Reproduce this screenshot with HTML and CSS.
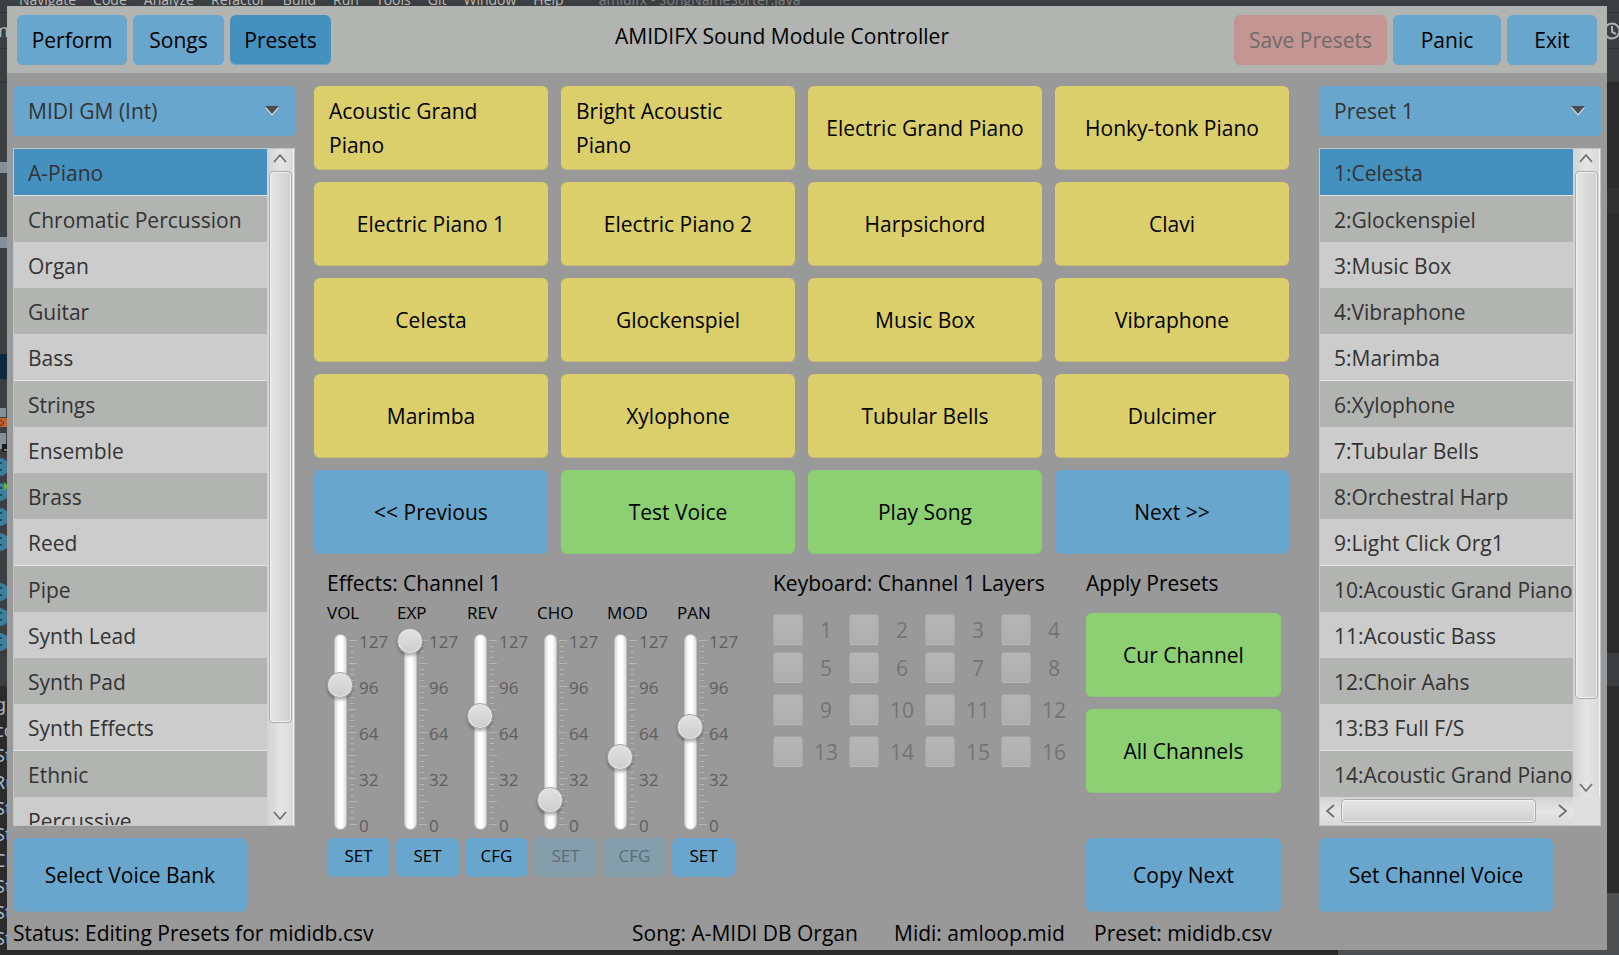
FILE: index.html
```html
<!DOCTYPE html>
<html lang="en">
<head>
<meta charset="utf-8">
<title>AMIDIFX Sound Module Controller</title>
<link rel="stylesheet" href="styles.css">
</head>
<body>
<svg class="defs" width="0" height="0" aria-hidden="true">
  <symbol id="down" viewBox="0 0 16 10"><path d="M1 1.500h14L8 9.500z" fill="#e8eef2"/><path d="M1 0h14L8 8z" fill="#4d4d4d"/></symbol>
  <symbol id="chev" viewBox="0 0 16 10"><path d="M2 9 8 2 14 9" fill="none" stroke="#6e6e6e" stroke-width="1.700"/></symbol>
  <symbol id="ticks" viewBox="0 0 8 186">
    <g stroke="#b4b4b4" shape-rendering="crispEdges">
      <path d="M0 1.500h8M0 24.500h8M0 47.500h8M0 70.500h8M0 93.500h8M0 116.500h8M0 139.500h8M0 162.500h8M0 185.500h8"/>
      <path d="M1 7.500h4M1 12.500h4M1 18.500h4M1 30.500h4M1 35.500h4M1 41.500h4M1 53.500h4M1 58.500h4M1 64.500h4M1 76.500h4M1 81.500h4M1 87.500h4M1 99.500h4M1 104.500h4M1 110.500h4M1 122.500h4M1 127.500h4M1 133.500h4M1 145.500h4M1 150.500h4M1 156.500h4M1 168.500h4M1 173.500h4M1 179.500h4"/>
    </g>
  </symbol>
</svg>

<div class="desktop">
  <div class="ide-menu">
    <span><u>N</u>avigate</span><span><u>C</u>ode</span><span>Analy<u>z</u>e</span><span><u>R</u>efactor</span><span><u>B</u>uild</span><span>R<u>u</u>n</span><span><u>T</u>ools</span><span>Gi<u>t</u></span><span><u>W</u>indow</span><span><u>H</u>elp</span><span class="ide-title">amidifx - SongNameSorter.java</span>
  </div>

  <svg class="ide-left" width="7" height="944" viewBox="0 6 7 944" aria-hidden="true">
    <rect y="6" width="7" height="680" fill="#3c3f41"/>
    <rect y="686" width="7" height="264" fill="#2b2b2b"/>
    <path d="M0 12.500h7M0 48.500h7M0 82.500h7M0 652.500h7" stroke="#2f3133"/>
    <rect y="162" width="7" height="11" fill="#84919a"/><rect y="237" width="7" height="11" fill="#84919a"/>
    <rect y="354" width="7" height="25" fill="#0d293e"/>
    <rect y="408" width="6" height="9" fill="#84919a"/>
    <rect y="418" width="7" height="9" fill="#c4602f"/><path d="M0 420l4 3-4 3" fill="none" stroke="#5a2c18"/>
    <rect y="433" width="6" height="16" fill="#84919a"/><path d="M2 444h5v8H2z" fill="#1b1b1b"/><path d="M4 450h3" stroke="#ddd"/>
    <g fill="#3b7f9c"><circle cy="467" r="9"/><circle cy="492" r="9"/><circle cy="517" r="9"/><circle cy="542" r="9"/><circle cy="592" r="9"/><circle cy="617" r="9"/><circle cy="642" r="9"/></g>
    <path d="M0 463h2M0 470h2M0 488h2M0 495h2M0 513h2M0 520h2M0 538h2M0 545h2M0 588h2M0 595h2M0 613h2M0 620h2M0 638h2M0 645h2" stroke="#28495a" stroke-width="2"/>
    <path d="M4 482l4 4-4 5z" fill="#62b543"/>
    <g class="ide-code">
      <text x="-8" y="37">m</text><text x="-5" y="711">g</text><text x="-5" y="737">co</text><text x="-5" y="762">St</text><text x="-6" y="789">Ru</text><text x="-5" y="815">St</text><text x="-5" y="841">St</text><text x="-6" y="867">Cl</text><text x="-5" y="893">St</text><text x="-5" y="919">St</text><text x="-5" y="945">St</text>
    </g>
  </svg>

  <div class="window">
    <header class="toolbar">
      <nav class="tools">
        <button class="btn w-110">Perform</button>
        <button class="btn w-91">Songs</button>
        <button class="btn w-101 active">Presets</button>
      </nav>
      <h1>AMIDIFX Sound Module Controller</h1>
      <div class="tools end">
        <button class="btn danger w-153" disabled>Save Presets</button>
        <button class="btn w-108">Panic</button>
        <button class="btn w-90">Exit</button>
      </div>
    </header>

    <main class="content">
      <section class="side">
        <div class="combo">
          <select aria-label="Sound module"><option>MIDI GM (Int)</option></select>
          <svg width="16" height="10"><use href="#down"/></svg>
        </div>
        <div class="listbox">
          <ul class="rows" role="listbox" aria-label="Voice banks">
            <li role="option" aria-selected="true">A-Piano</li>
            <li role="option">Chromatic Percussion</li>
            <li role="option">Organ</li>
            <li role="option">Guitar</li>
            <li role="option">Bass</li>
            <li role="option">Strings</li>
            <li role="option">Ensemble</li>
            <li role="option">Brass</li>
            <li role="option">Reed</li>
            <li role="option">Pipe</li>
            <li role="option">Synth Lead</li>
            <li role="option">Synth Pad</li>
            <li role="option">Synth Effects</li>
            <li role="option">Ethnic</li>
            <li role="option">Percussive</li>
          </ul>
          <div class="vbar">
            <svg width="16" height="10"><use href="#chev"/></svg>
            <div class="track"><div class="thumb" style="height:87%"></div></div>
            <svg class="flip" width="16" height="10"><use href="#chev"/></svg>
          </div>
        </div>
        <button class="btn big w-234">Select Voice Bank</button>
      </section>

      <section class="center">
        <div class="voices">
          <button class="voice wrap">Acoustic Grand<br>Piano</button>
          <button class="voice wrap">Bright Acoustic<br>Piano</button>
          <button class="voice">Electric Grand Piano</button>
          <button class="voice">Honky-tonk Piano</button>
          <button class="voice">Electric Piano 1</button>
          <button class="voice">Electric Piano 2</button>
          <button class="voice">Harpsichord</button>
          <button class="voice">Clavi</button>
          <button class="voice">Celesta</button>
          <button class="voice">Glockenspiel</button>
          <button class="voice">Music Box</button>
          <button class="voice">Vibraphone</button>
          <button class="voice">Marimba</button>
          <button class="voice">Xylophone</button>
          <button class="voice">Tubular Bells</button>
          <button class="voice">Dulcimer</button>
          <button class="voice blue">&lt;&lt; Previous</button>
          <button class="voice green">Test Voice</button>
          <button class="voice green">Play Song</button>
          <button class="voice blue">Next &gt;&gt;</button>
        </div>

        <div class="panels">
          <section class="effects">
            <h2>Effects: Channel 1</h2>
            <div class="sliders">
              <div class="fader"><label for="vol">VOL</label><div class="fader-body"><span class="rail"></span><svg width="8" height="186"><use href="#ticks"/></svg><div class="scale"><span>127</span><span>96</span><span>64</span><span>32</span><span>0</span></div><input id="vol" type="range" min="0" max="127" value="96"></div></div>
              <div class="fader"><label for="exp">EXP</label><div class="fader-body"><span class="rail"></span><svg width="8" height="186"><use href="#ticks"/></svg><div class="scale"><span>127</span><span>96</span><span>64</span><span>32</span><span>0</span></div><input id="exp" type="range" min="0" max="127" value="127"></div></div>
              <div class="fader"><label for="rev">REV</label><div class="fader-body"><span class="rail"></span><svg width="8" height="186"><use href="#ticks"/></svg><div class="scale"><span>127</span><span>96</span><span>64</span><span>32</span><span>0</span></div><input id="rev" type="range" min="0" max="127" value="75"></div></div>
              <div class="fader"><label for="cho">CHO</label><div class="fader-body"><span class="rail"></span><svg width="8" height="186"><use href="#ticks"/></svg><div class="scale"><span>127</span><span>96</span><span>64</span><span>32</span><span>0</span></div><input id="cho" type="range" min="0" max="127" value="16"></div></div>
              <div class="fader"><label for="mod">MOD</label><div class="fader-body"><span class="rail"></span><svg width="8" height="186"><use href="#ticks"/></svg><div class="scale"><span>127</span><span>96</span><span>64</span><span>32</span><span>0</span></div><input id="mod" type="range" min="0" max="127" value="46"></div></div>
              <div class="fader"><label for="pan">PAN</label><div class="fader-body"><span class="rail"></span><svg width="8" height="186"><use href="#ticks"/></svg><div class="scale"><span>127</span><span>96</span><span>64</span><span>32</span><span>0</span></div><input id="pan" type="range" min="0" max="127" value="67"></div></div>
            </div>
            <div class="fx-buttons">
              <button class="btn small">SET</button>
              <button class="btn small">SET</button>
              <button class="btn small">CFG</button>
              <button class="btn small" disabled>SET</button>
              <button class="btn small" disabled>CFG</button>
              <button class="btn small">SET</button>
            </div>
          </section>

          <section class="keyboard">
            <h2>Keyboard: Channel 1 Layers</h2>
            <div class="layers">
              <label><input type="checkbox" disabled><span>1</span></label>
              <label><input type="checkbox" disabled><span>2</span></label>
              <label><input type="checkbox" disabled><span>3</span></label>
              <label><input type="checkbox" disabled><span>4</span></label>
              <label><input type="checkbox" disabled><span>5</span></label>
              <label><input type="checkbox" disabled><span>6</span></label>
              <label><input type="checkbox" disabled><span>7</span></label>
              <label><input type="checkbox" disabled><span>8</span></label>
              <label><input type="checkbox" disabled><span>9</span></label>
              <label><input type="checkbox" disabled><span>10</span></label>
              <label><input type="checkbox" disabled><span>11</span></label>
              <label><input type="checkbox" disabled><span>12</span></label>
              <label><input type="checkbox" disabled><span>13</span></label>
              <label><input type="checkbox" disabled><span>14</span></label>
              <label><input type="checkbox" disabled><span>15</span></label>
              <label><input type="checkbox" disabled><span>16</span></label>
            </div>
          </section>

          <section class="apply">
            <h2>Apply Presets</h2>
            <div class="apply-buttons">
              <button class="voice green">Cur Channel</button>
              <button class="voice green">All Channels</button>
            </div>
            <button class="btn big">Copy Next</button>
          </section>
        </div>
      </section>

      <section class="side">
        <div class="combo">
          <select aria-label="Preset"><option>Preset 1</option></select>
          <svg width="16" height="10"><use href="#down"/></svg>
        </div>
        <div class="listbox scroll-x">
          <ul class="rows" role="listbox" aria-label="Channel voices">
            <li role="option" aria-selected="true">1:Celesta</li>
            <li role="option">2:Glockenspiel</li>
            <li role="option">3:Music Box</li>
            <li role="option">4:Vibraphone</li>
            <li role="option">5:Marimba</li>
            <li role="option">6:Xylophone</li>
            <li role="option">7:Tubular Bells</li>
            <li role="option">8:Orchestral Harp</li>
            <li role="option">9:Light Click Org1</li>
            <li role="option">10:Acoustic Grand Piano</li>
            <li role="option">11:Acoustic Bass</li>
            <li role="option">12:Choir Aahs</li>
            <li role="option">13:B3 Full F/S</li>
            <li role="option">14:Acoustic Grand Piano</li>
          </ul>
          <div class="vbar">
            <svg width="16" height="10"><use href="#chev"/></svg>
            <div class="track"><div class="thumb" style="height:87%"></div></div>
            <svg class="flip" width="16" height="10"><use href="#chev"/></svg>
          </div>
          <div class="hbar">
            <svg class="left" width="16" height="10"><use href="#chev"/></svg>
            <div class="track"><div class="thumb" style="width:92%"></div></div>
            <svg class="right" width="16" height="10"><use href="#chev"/></svg>
          </div>
        </div>
        <button class="btn big w-234">Set Channel Voice</button>
      </section>
    </main>

    <footer class="status">
      <span>Status: Editing Presets for mididb.csv</span>
      <span>Song: A-MIDI DB Organ</span>
      <span>Midi: amloop.mid</span>
      <span>Preset: mididb.csv</span>
    </footer>
  </div>

  <svg class="ide-right" width="12" height="944" viewBox="1607 6 12 944" aria-hidden="true">
    <rect x="1607" y="6" width="12" height="944" fill="#2b2b2b"/>
    <rect x="1607" y="6" width="12" height="76" fill="#3c3f41"/>
    <rect x="1607" y="188" width="12" height="26" fill="#323232"/>
    <rect x="1607" y="653" width="12" height="33" fill="#3c3f41"/>
    <rect x="1607" y="893" width="12" height="57" fill="#4e5052"/>
    <path d="M1607 12.500h12M1607 48.500h12" stroke="#2f3133"/>
    <circle cx="1612" cy="31" r="7.500" fill="none" stroke="#afb1b3" stroke-width="2"/>
    <path d="M1612 26v6l4 2" fill="none" stroke="#afb1b3" stroke-width="2"/>
  </svg>
  <div class="ide-bottom"></div>
</div>
</body>
</html>
```

FILE: styles.css
```css
* { box-sizing: border-box; }

body {
  margin: 0;
  background: #2b2b2b;
  color: #000;
  font: 21px/34px "Segoe UI", "Open Sans", "Noto Sans", sans-serif;
}

button, select, input { font: inherit; color: inherit; margin: 0; }
h1, h2 { margin: 0; font-size: inherit; font-weight: 400; white-space: nowrap; }
svg { display: block; }
.defs { position: absolute; }

/* Desktop behind the application window */
.desktop {
  display: grid;
  grid-template: 6px minmax(0, 1fr) 5px / 7px minmax(0, 1fr) 12px;
  height: 100vh;
  min-height: 955px;
  overflow: hidden;
}
.ide-menu {
  grid-column: 1 / -1;
  display: flex;
  align-items: flex-end;
  gap: 17px;
  padding-left: 19px;
  overflow: hidden;
  background: #3c3f41;
  color: #bbb;
  font-size: 14px;
  line-height: 12px;
  white-space: nowrap;
}
.ide-title { color: #7d7f80; padding-left: 18px; }
.ide-code { font: 18px "Noto Sans", sans-serif; fill: #a9b7c6; }
.ide-bottom {
  grid-column: 1 / -1;
  background: linear-gradient(90deg, #2b2b2b 1338px, #4e5052 1338px);
}

/* Application window */
.window {
  display: flex;
  flex-direction: column;
  background: #999;
}

.toolbar {
  display: grid;
  grid-template-columns: 1fr auto 1fr;
  align-items: start;
  height: 67px;
  padding: 9px 10px 0;
  background: #b1b4b1;
}
.toolbar h1 { line-height: 42px; margin-right: 50px; }
.tools { display: flex; gap: 6px; }
.end { justify-content: flex-end; }

.btn, .voice {
  border: 0;
  border-radius: 6px;
  padding: 0;
  white-space: nowrap;
  background: #68a6cd;
  box-shadow: inset 0 -1px #72a3c0;
}
.btn { height: 50px; }
.btn.active { background: #4491c0; }
.btn:disabled { background: #849eac; color: #5c6d77; box-shadow: none; }
.btn.danger:disabled { background: #c39593; color: #6f6c6a; }
.btn.big { height: 74px; }
.btn.small { height: 39px; font-size: 17px; line-height: 24px; padding-bottom: 4px; }
.w-90 { width: 90px; }
.w-91 { width: 91px; }
.w-101 { width: 101px; }
.w-108 { width: 108px; }
.w-110 { width: 110px; }
.w-153 { width: 153px; }
.w-234 { width: 234px; }

.content {
  flex: 1;
  min-height: 0;
  display: grid;
  grid-template-columns: 282px minmax(0, 1fr) 282px;
  padding: 13px 6px 0;
}

/* Side lists */
.side { display: flex; flex-direction: column; gap: 12px; min-height: 0; }

.combo { display: grid; align-items: center; color: #333; }
.combo > * { grid-area: 1 / 1; }
.combo select {
  appearance: none;
  width: 100%;
  height: 50px;
  padding: 0 15px;
  border: 0;
  border-radius: 4px;
  background: #68a6cd;
}
.combo svg { justify-self: end; margin-right: 15px; pointer-events: none; }

.listbox {
  flex: 1 1 0;
  min-height: 0;
  display: grid;
  grid-template: minmax(0, 1fr) / minmax(0, 1fr) 27px;
  border: 1px solid #c4c4c4;
  background: #dedede;
  color: #333;
}
.scroll-x { grid-template-rows: minmax(0, 1fr) 28px; }
.rows { margin: 0; padding: 0; list-style: none; overflow: hidden; }
.rows li {
  height: 46px;
  padding: 0 14px;
  line-height: 49px;
  white-space: nowrap;
  background: #ccc;
}
.rows li:nth-child(4n + 1) { height: 47px; border-bottom: 1px solid #e4e4e4; }
.rows li:nth-child(even) { background: #b1b4b1; }
.rows li[aria-selected] { background: #4491c0; }

.vbar, .hbar {
  display: flex;
  align-items: center;
  background: linear-gradient(90deg, #d2d2d2, #e4e4e4 50%, #dadada);
}
.vbar { flex-direction: column; padding: 4px 0; border-right: 1px solid #f2f2f2; }
.hbar { padding: 0 2px; background: linear-gradient(#d2d2d2, #e4e4e4 50%, #dadada); }
.track { flex: 1; }
.vbar .track { width: 23px; margin: 8px 0 5px; }
.hbar .track { height: 24px; margin: 0 2px 0 3px; }
.thumb {
  height: 100%;
  border: 1px solid #adadad;
  border-radius: 4px;
  background: linear-gradient(90deg, #e6e6e6, #cfcfcf);
  box-shadow: inset 0 0 0 1px #f0f0f0;
}
.hbar .thumb { background: linear-gradient(#e6e6e6, #cfcfcf); }
.flip { transform: rotate(180deg); }
.left { transform: rotate(-90deg); }
.right { transform: rotate(90deg); }

/* Voices */
.center { display: flex; flex-direction: column; margin: 0 30px 0 19px; }
.voices {
  display: grid;
  grid-template-columns: repeat(4, minmax(0, 1fr));
  grid-auto-rows: 84px;
  gap: 12px 13px;
}
.voice { background: #dbcf6b; box-shadow: inset 0 -1px #c9bf70; }
.wrap { text-align: left; padding: 0 15px; }
.blue { background: #68a6cd; box-shadow: inset 0 -1px #72a3c0; }
.green { background: #8dd073; box-shadow: inset 0 -1px #8cc577; }

.panels {
  flex: 1;
  display: grid;
  grid-template-columns: minmax(0, 1fr) 313px 195px;
  padding: 14px 8px 0 13px;
}
.panels h2 { line-height: 30px; }

.sliders { display: grid; grid-template-columns: repeat(6, 70px); }
.fader label { display: block; font-size: 17px; line-height: 30px; }
.fader-body {
  display: grid;
  grid-template-columns: 26px 36px;
  height: 208px;
  align-items: start;
}
.fader-body > * { grid-area: 1 / 1; }
.rail {
  justify-self: center;
  width: 13px;
  height: 196px;
  margin-top: 6px;
  border: 1px solid #bdbdbd;
  border-radius: 7px;
  background: linear-gradient(90deg, #dcdcdc, #fff 35%, #fff 65%, #dcdcdc);
}
.fader-body svg { margin: 11px 0 0 22px; }
.fader-body .scale {
  grid-column: 2;
  padding: 2px 0 0 6px;
  font-size: 17px;
  color: #5f5f5f;
}
.scale span { display: block; height: 46px; line-height: 24px; }
.fader input {
  appearance: none;
  writing-mode: vertical-lr;
  direction: rtl;
  width: 26px;
  height: 208px;
  background: transparent;
}
.fader input::-webkit-slider-thumb {
  appearance: none;
  width: 26px;
  height: 26px;
  border: 1px solid #a2a2a2;
  border-radius: 50%;
  background: linear-gradient(#e2e2e2, #cdcdcd);
  box-shadow: inset 0 0 0 1px #ececec, 0 2px 3px rgba(0, 0, 0, .3);
}
.fx-buttons { display: grid; grid-template-columns: repeat(6, 63px); gap: 6px; margin-top: 2px; }

.layers {
  display: grid;
  grid-template-columns: repeat(4, 76px);
  grid-template-rows: 38px 42px 42px 31px;
  margin-top: 16px;
  color: #747474;
}
.layers label { display: flex; height: 31px; align-items: center; }
.layers input {
  appearance: none;
  width: 30px;
  height: 31px;
  border: 1px solid #a6a6a6;
  border-bottom-color: #bababa;
  border-radius: 3px;
  background: linear-gradient(#b6b6b6, #aeaeae);
}
.layers span { width: 30px; margin-left: 8px; text-align: center; }

.apply { display: flex; flex-direction: column; justify-content: space-between; }
.apply h2 { margin-bottom: 15px; }
.apply-buttons { display: grid; grid-auto-rows: 84px; gap: 12px; margin-bottom: auto; }

.status {
  display: grid;
  grid-template-columns: 619px 262px 200px 1fr;
  height: 38px;
  padding: 0 6px;
  line-height: 43px;
  white-space: nowrap;
}
```
